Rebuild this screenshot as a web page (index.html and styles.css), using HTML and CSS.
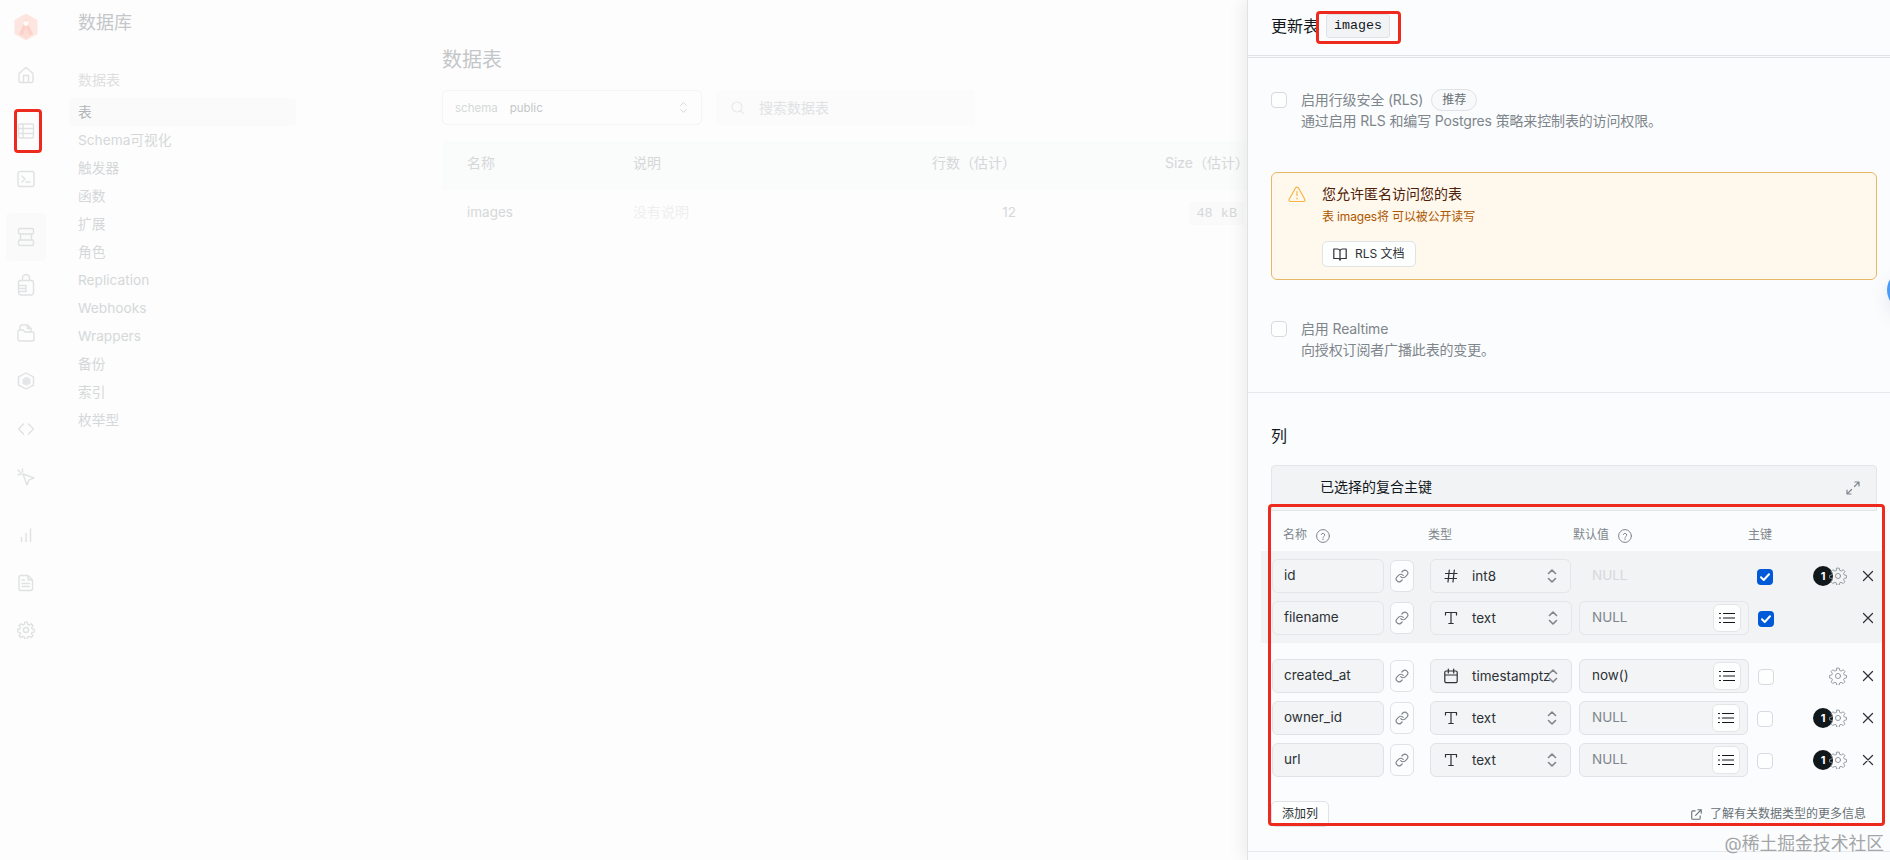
FILE: index.html
```
<!DOCTYPE html>
<html lang="zh-CN">
<head>
    <meta charset="UTF-8">
    <title>数据库</title>
    <link rel="stylesheet" href="styles.css">
</head>
<body>
<svg class="sprite">
    <symbol id="i-link" viewBox="0 0 24 24"><path d="M10 13a5 5 0 0 0 7.54.54l3-3a5 5 0 0 0-7.07-7.07l-1.72 1.71"/><path d="M14 11a5 5 0 0 0-7.54-.54l-3 3a5 5 0 0 0 7.07 7.07l1.71-1.71"/></symbol>
    <symbol id="i-updown" viewBox="0 0 10 16"><path d="M1.5 5.5 5 2l3.500 3.500M1.500 10.500 5 14l3.500-3.500"/></symbol>
    <symbol id="i-list" viewBox="0 0 16 12"><path d="M4.500 1.500H15.500M4.500 6H15.500M4.500 10.500H15.500M.5 1.500h1M.5 6h1M.5 10.500h1"/></symbol>
    <symbol id="i-x" viewBox="0 0 12 12"><path d="M1.500 1.500l9 9M10.500 1.500l-9 9"/></symbol>
    <symbol id="i-type" viewBox="0 0 14 14"><path d="M1.500 4V1.500h11V4M7 1.500v11M4.800 12.500h4.400"/></symbol>
    <symbol id="i-hash" viewBox="0 0 14 14"><path d="M1.500 4.500h11.500M1 9.500h11.500M5.300 1 4 13M10.300 1 9 13"/></symbol>
    <symbol id="i-cal" viewBox="0 0 14 16"><path d="M2.300 3h9.400a1.500 1.500 0 0 1 1.500 1.500v8.700a1.500 1.500 0 0 1-1.500 1.500H2.300a1.500 1.500 0 0 1-1.500-1.500V4.500A1.500 1.500 0 0 1 2.300 3zM.8 7h12.400M4.300 1v4M9.700 1v4"/></symbol>
    <symbol id="i-help" viewBox="0 0 14 14"><circle cx="7" cy="7" r="6.400"/><path d="M5.300 5.500a1.750 1.750 0 0 1 3.400.6c0 1.100-1.700 1.400-1.700 2.200M7 9.800v.8"/></symbol>
    <symbol id="i-cog" viewBox="0 0 24 24"><circle cx="12" cy="12" r="3.400"/><path d="M10.400 1.500h3.200l.7 3.100 1.900.8 2.700-1.700 2.300 2.300-1.700 2.700.8 1.900 3.100.7v3.200l-3.100.7-.8 1.900 1.700 2.700-2.300 2.300-2.700-1.700-1.900.8-.7 3.100h-3.200l-.7-3.100-1.900-.8-2.700 1.700-2.300-2.300 1.700-2.700-.8-1.900-3.100-.7v-3.200l3.100-.7.8-1.900-1.700-2.700 2.300-2.300 2.700 1.700 1.900-.8z"/></symbol>
    <symbol id="i-check" viewBox="0 0 16 16"><path d="M4 8.300 6.700 11 12 5.300"/></symbol>
</svg>

<div class="page">
    <nav class="rail">
        <a class="logo">
            <svg width="26" height="28" viewBox="0 0 26 28"><path d="M13 .5 24.500 7v14L13 27.500 1.500 21V7z" fill="#fde6df"/><path d="M13 6 20 21l-3.500 2L13 15l-3.500 8L6 21z" fill="#fbd2c9"/><path d="M13 15l3.500 8L13 26l-3.500-3z" fill="#fcdcd5"/><circle cx="13" cy="10.500" r="2.500" fill="#fffaf5"/></svg>
        </a>
        <a class="icon"><svg width="18" height="18" viewBox="0 0 18 18"><path d="M2 7.500 9 1.500l7 6v7a2 2 0 0 1-2 2H4a2 2 0 0 1-2-2zM6.500 16.500V9.500h5v7"/></svg></a>
        <a class="icon gap8"><svg width="18" height="18" viewBox="0 0 18 18"><path d="M3 2h12a1.500 1.500 0 0 1 1.500 1.500v11A1.500 1.500 0 0 1 15 16H3a1.500 1.500 0 0 1-1.500-1.500v-11A1.500 1.500 0 0 1 3 2zM1.500 6.500h15M1.500 11.500h15M6 2v14"/></svg></a>
        <a class="icon"><svg width="18" height="18" viewBox="0 0 18 18"><rect x="1" y="1.500" width="16" height="15" rx="2"/><path d="M5 6l3 3-3 3M9 12h4"/></svg></a>
        <a class="icon gap10 active"><svg width="18" height="20" viewBox="0 0 18 20"><rect x="1.500" y="1.500" width="15" height="5.500" rx="1.500"/><rect x="1.500" y="13" width="15" height="5.500" rx="1.500"/><path d="M3.500 7V13M14.500 7V13"/></svg></a>
        <a class="icon"><svg width="18" height="22" viewBox="0 0 18 22"><path d="M5.500 6.500V4a3.500 3.500 0 0 1 7 0v2.500M4 6.500h10a2.500 2.500 0 0 1 2.500 2.500v9.500A2.500 2.500 0 0 1 14 21H4a2.500 2.500 0 0 1-2.500-2.500V9A2.500 2.500 0 0 1 4 6.500zM1.500 11.500h7.500v6H1.500M3 14.500h6"/></svg></a>
        <a class="icon"><svg width="18" height="18" viewBox="0 0 18 18"><path d="M3 6V2.500A1.500 1.500 0 0 1 4.500 1h6L14 4.500V7M10.500 1v3.500H14M1 14.500V7.500A1.500 1.500 0 0 1 2.500 6H6l2 2h7.500A1.500 1.500 0 0 1 17 9.500v5.500a2 2 0 0 1-2 2H3a2 2 0 0 1-2-2.500z"/></svg></a>
        <a class="icon"><svg width="18" height="18" viewBox="0 0 18 18"><path d="M9 1l7.500 3.800v8.400L9 17l-7.500-3.800V4.800z"/><path class="solid" d="M9.500 4.800 13.500 7v4.500l-4 2.200-4-2.200V7z"/></svg></a>
        <a class="icon"><svg width="18" height="18" viewBox="0 0 18 18"><path d="M6.500 4 1.500 9l5 5M11.500 4l5 5-5 5"/></svg></a>
        <a class="icon"><svg width="18" height="18" viewBox="0 0 18 18"><path d="M6 6l11 3.800-4.800 2L10 17zM1 2l3 3M5.500 1v3M1 6.500h3"/></svg></a>
        <a class="icon gap10"><svg width="18" height="18" viewBox="0 0 18 18"><path d="M4.500 11.500v4M9 7.500v8M13.500 3v12.500"/></svg></a>
        <a class="icon"><svg width="18" height="18" viewBox="0 0 18 18"><path d="M4 1.500h7l4.500 4.500v8.500a2 2 0 0 1-2 2H4a2 2 0 0 1-2-2v-11a2 2 0 0 1 2-2zM11 1.500V6h4.500M5 6h2.500M5 9.500h7.500M5 12.500h7.500"/></svg></a>
        <a class="icon last"><svg width="18" height="18" viewBox="0 0 24 24"><use href="#i-cog"/></svg></a>
    </nav>

    <aside class="sidebar">
        <h1>数据库</h1>
        <h2>数据表</h2>
        <ul>
            <li class="selected">表</li>
            <li>Schema可视化</li>
            <li>触发器</li>
            <li>函数</li>
            <li>扩展</li>
            <li>角色</li>
            <li>Replication</li>
            <li>Webhooks</li>
            <li>Wrappers</li>
            <li>备份</li>
            <li>索引</li>
            <li>枚举型</li>
        </ul>
    </aside>

    <main class="main">
        <h1>数据表</h1>
        <div class="filters">
            <div class="schema"><span>schema</span><b>public</b><svg width="9" height="13"><use href="#i-updown"/></svg></div>
            <div class="search"><svg width="13" height="13" viewBox="0 0 13 13"><circle cx="6" cy="6" r="5"/><path d="M10 10l2.500 2.500"/></svg>搜索数据表</div>
        </div>
        <div class="thead"><span>名称</span><span>说明</span><span class="rows">行数（估计）</span><span class="size">Size（估计）</span></div>
        <div class="trow"><span>images</span><span class="none">没有说明</span><span class="rows">12</span><span class="size"><code>48 kB</code></span></div>
    </main>

    <section class="panel">
        <header>更新表<code>images</code></header>
        <div class="options">
            <div class="option">
                <i class="box"></i>
                <div>
                    <p class="label">启用行级安全 (RLS)<span class="tag">推荐</span></p>
                    <p>通过启用 RLS 和编写 Postgres 策略来控制表的访问权限。</p>
                </div>
            </div>
            <div class="alert">
                <svg class="warn" width="18" height="17" viewBox="0 0 18 17"><path d="M7.700 1.800 1.200 13.200A1.500 1.500 0 0 0 2.500 15.500h13a1.500 1.500 0 0 0 1.300-2.300L10.300 1.800a1.500 1.500 0 0 0-2.600 0zM9 5.500v4M9 12v1"/></svg>
                <div>
                    <h3>您允许匿名访问您的表</h3>
                    <p>表 images将 可以被公开读写</p>
                    <button><svg width="14" height="13" viewBox="0 0 14 13"><path d="M7 2.500C6.500 1.500 5.500 1 4.500 1H.8v9.500H5c1 0 2 .6 2 1.700 0-1.100 1-1.700 2-1.700h4.200V1H9.500C8.500 1 7.500 1.500 7 2.500zM7 2.500v9.500"/></svg>RLS 文档</button>
                </div>
            </div>
            <div class="option">
                <i class="box"></i>
                <div>
                    <p class="label">启用 Realtime</p>
                    <p>向授权订阅者广播此表的变更。</p>
                </div>
            </div>
        </div>

        <div class="columns">
            <h2>列</h2>
            <div class="notice">已选择的复合主键
                <svg width="14" height="14" viewBox="0 0 14 14"><path d="M8.500 5.500 12.800 1.200M9 1h4v4M5.500 8.500 1.200 12.800M1 9v4h4"/></svg>
            </div>
            <div class="heads">
                <span class="h-name">名称<svg width="14" height="14"><use href="#i-help"/></svg></span>
                <span class="h-type">类型</span>
                <span class="h-default">默认值<svg width="14" height="14"><use href="#i-help"/></svg></span>
                <span>主键</span>
            </div>
            <div class="rows-group keys">
                <div class="row">
                    <div class="input">id</div>
                    <div class="fk"><svg width="14" height="14"><use href="#i-link"/></svg></div>
                    <div class="input type short"><svg class="ti" width="14" height="14"><use href="#i-hash"/></svg>int8<svg class="ud" width="10" height="16"><use href="#i-updown"/></svg></div>
                    <div class="input default off">NULL</div>
                    <i class="box on"><svg width="16" height="16"><use href="#i-check"/></svg></i>
                    <div class="tools"><em>1</em><svg width="18" height="18"><use href="#i-cog"/></svg></div>
                    <svg class="del" width="12" height="12"><use href="#i-x"/></svg>
                </div>
                <div class="row">
                    <div class="input">filename</div>
                    <div class="fk"><svg width="14" height="14"><use href="#i-link"/></svg></div>
                    <div class="input type"><svg class="ti" width="14" height="14"><use href="#i-type"/></svg>text<svg class="ud" width="10" height="16"><use href="#i-updown"/></svg></div>
                    <div class="input default">NULL<span class="pick"><svg width="16" height="12"><use href="#i-list"/></svg></span></div>
                    <i class="box on"><svg width="16" height="16"><use href="#i-check"/></svg></i>
                    <div class="tools"></div>
                    <svg class="del" width="12" height="12"><use href="#i-x"/></svg>
                </div>
            </div>
            <div class="rows-group">
                <div class="row">
                    <div class="input">created_at</div>
                    <div class="fk"><svg width="14" height="14"><use href="#i-link"/></svg></div>
                    <div class="input type"><svg class="ti" width="14" height="16"><use href="#i-cal"/></svg><span class="long">timestamptz</span><svg class="ud" width="10" height="16"><use href="#i-updown"/></svg></div>
                    <div class="input default filled">now()<span class="pick"><svg width="16" height="12"><use href="#i-list"/></svg></span></div>
                    <i class="box"></i>
                    <div class="tools"><svg width="18" height="18"><use href="#i-cog"/></svg></div>
                    <svg class="del" width="12" height="12"><use href="#i-x"/></svg>
                </div>
                <div class="row">
                    <div class="input">owner_id</div>
                    <div class="fk"><svg width="14" height="14"><use href="#i-link"/></svg></div>
                    <div class="input type short"><svg class="ti" width="14" height="14"><use href="#i-type"/></svg>text<svg class="ud" width="10" height="16"><use href="#i-updown"/></svg></div>
                    <div class="input default short">NULL<span class="pick"><svg width="16" height="12"><use href="#i-list"/></svg></span></div>
                    <i class="box"></i>
                    <div class="tools"><em>1</em><svg width="18" height="18"><use href="#i-cog"/></svg></div>
                    <svg class="del" width="12" height="12"><use href="#i-x"/></svg>
                </div>
                <div class="row">
                    <div class="input">url</div>
                    <div class="fk"><svg width="14" height="14"><use href="#i-link"/></svg></div>
                    <div class="input type short"><svg class="ti" width="14" height="14"><use href="#i-type"/></svg>text<svg class="ud" width="10" height="16"><use href="#i-updown"/></svg></div>
                    <div class="input default short">NULL<span class="pick"><svg width="16" height="12"><use href="#i-list"/></svg></span></div>
                    <i class="box"></i>
                    <div class="tools"><em>1</em><svg width="18" height="18"><use href="#i-cog"/></svg></div>
                    <svg class="del" width="12" height="12"><use href="#i-x"/></svg>
                </div>
            </div>
            <div class="foot">
                <button>添加列</button>
                <a><svg width="11" height="11" viewBox="0 0 12 12"><path d="M4.500 2H2A1.200 1.200 0 0 0 .8 3.200V10A1.200 1.200 0 0 0 2 11.200h6.800A1.200 1.200 0 0 0 10 10V7.500M7.500.8h3.700v3.700M11 1 5 7"/></svg>了解有关数据类型的更多信息</a>
            </div>
        </div>
    </section>

    <div class="mark mark-rail"></div>
    <div class="mark mark-title"></div>
    <div class="mark mark-columns"></div>
    <div class="bubble"></div>
    <div class="watermark">@稀土掘金技术社区</div>
</div>
</body>
</html>
```
FILE: styles.css
```
*{
    margin: 0;
    padding: 0;
    box-sizing: border-box;
}
body{
    font: 14px/20px Inter, "Noto Sans CJK SC", sans-serif;
    color: #11181c;
    background: #fdfdfd;
}
ul{
    list-style: none;
}
h1, h2, h3, b{
    font-weight: normal;
}
i, em{
    font-style: normal;
}
svg{
    fill: none;
    stroke: currentColor;
    stroke-width: 1.2;
    stroke-linecap: round;
    stroke-linejoin: round;
    flex-shrink: 0;
    display: block;
}
.sprite{
    position: absolute;
    width: 0;
    height: 0;
}
button{
    font: 12px/18px Inter, "Noto Sans CJK SC", sans-serif;
    color: #2b3135;
    background: #fdfefe;
    border: 1px solid #dfe3e6;
    border-radius: 5px;
    display: flex;
    align-items: center;
}
.page{
    display: flex;
    width: 1890px;
    height: 860px;
    position: relative;
    overflow: hidden;
}

/* icon rail */
.rail{
    width: 52px;
    display: flex;
    flex-direction: column;
    align-items: center;
    color: #dfe1e2;
}
.logo{
    height: 51px;
    padding-top: 13px;
}
.logo svg{
    stroke: none;
}
.icon{
    width: 40px;
    height: 48px;
    display: flex;
    align-items: center;
    justify-content: center;
}
.icon svg{
    stroke-width: 1.4;
}
.icon .solid{
    fill: #e4e6e7;
    stroke: none;
}
.last{
    height: 46px;
}
.last svg{
    stroke-width: 1.9;
}
.gap8{
    margin-top: 8px;
}
.gap10{
    margin-top: 10px;
}
.active{
    background: #fafafa;
    border-radius: 4px;
}

/* menu */
.sidebar{
    width: 244px;
    padding: 10px 0 0 17px;
    color: #d5d8d9;
}
.sidebar h1{
    padding-left: 9px;
    font-size: 18px;
    line-height: 26px;
    color: #c4c7c9;
}
.sidebar h2{
    padding: 33px 0 8px 9px;
    font-size: 14px;
    line-height: 21px;
    color: #dddfe0;
}
.sidebar li{
    height: 28px;
    padding-left: 9px;
    font-size: 13.700px;
    line-height: 28px;
}
.sidebar .selected{
    background: #fafafa;
    color: #b2b5b7;
    border-radius: 4px;
}

/* table list */
.main{
    width: 951px;
    padding: 46px 0 0 146px;
    color: #d5d8d9;
}
.main h1{
    font-size: 20px;
    line-height: 28px;
    color: #c4c7c9;
}
.filters{
    display: flex;
    gap: 14px;
    margin: 16px 0;
}
.schema{
    width: 260px;
    height: 35px;
    padding: 0 13px 0 12px;
    display: flex;
    align-items: center;
    border: 1px solid #f4f5f5;
    border-radius: 5px;
    font-size: 11.500px;
}
.schema b{
    margin: 0 auto 0 12px;
    color: #c4c7c9;
}
.search{
    width: 259px;
    height: 35px;
    padding-left: 15px;
    display: flex;
    align-items: center;
    gap: 15px;
    background: #fbfbfb;
    color: #e0e2e3;
}
.search svg{
    color: #e8eaea;
}
.thead, .trow{
    display: flex;
    height: 49px;
    align-items: center;
    padding: 0 0 6px 25px;
}
.thead{
    background: #fafbfb;
}
.trow{
    padding-bottom: 5px;
    font-size: 13.500px;
}
.thead span, .trow span{
    width: 166px;
    flex-shrink: 0;
}
.thead .rows, .trow .rows{
    width: 217px;
    text-align: right;
}
.thead .size{
    width: 233px;
    text-align: right;
}
.trow .size{
    width: 228px;
    text-align: right;
}
.trow .none{
    font-size: 14px;
    color: #efefef;
}
.trow code{
    padding: 4px 7px;
    font: 13.500px "Liberation Mono", monospace;
    background: #fafafa;
}

/* side panel */
.panel{
    width: 643px;
    border-left: 1px solid #dfe3e6;
    background: #fbfcfd;
    box-shadow: -4px 0 16px rgba(0, 0, 0, .07);
    position: relative;
}
.panel header{
    display: flex;
    align-items: center;
    height: 58px;
    padding: 0 0 3px 23px;
    border-bottom: 3px double #dfe3e6;
    font-size: 16px;
}
.panel header code{
    margin-left: 7px;
    height: 24px;
    padding: 0 7px;
    border: 1px solid #dfe3e6;
    border-radius: 3px;
    background: #f1f3f5;
    font: 13.300px/22px "Liberation Mono", monospace;
}
.options{
    height: 335px;
    padding: 31px 13px 0 23px;
    border-bottom: 1px solid #e6e8eb;
    color: #7e868c;
    letter-spacing: -.15px;
}
.option{
    display: flex;
    gap: 14px;
}
.label{
    display: flex;
    align-items: center;
    height: 22px;
}
.box{
    width: 16px;
    height: 16px;
    border: 1px solid #d7dbdf;
    border-radius: 4px;
    background: #fdfefe;
}
.option .box{
    margin-top: 3px;
}
.tag{
    margin-left: 8px;
    padding: 0 10px;
    border: 1px solid #dfe3e6;
    border-radius: 11px;
    background: #f8f9fa;
    font-size: 12px;
    line-height: 20px;
    letter-spacing: 0;
    color: #687076;
}
.alert{
    display: flex;
    gap: 15px;
    height: 108px;
    margin: 41px 0 38px;
    padding: 10px 18px 10px 16px;
    border: 1px solid #e8b765;
    border-radius: 6px;
    background: #fff8ec;
}
.warn{
    margin: 3px 1px 0 0;
    color: #f5b544;
}
.alert h3{
    font-size: 14px;
    line-height: 22px;
    letter-spacing: 0;
    color: #4e2009;
}
.alert p{
    margin: 2px 0 14px;
    font-size: 12px;
    color: #ad5700;
}
.alert button{
    height: 26px;
    padding: 0 10px;
    gap: 8px;
}

/* column editor */
.columns{
    padding: 31px 12px 0 23px;
    height: 459px;
    border-bottom: 1px solid #e6e8eb;
}
.columns h2{
    font-size: 16px;
    line-height: 24px;
}
.notice{
    display: flex;
    align-items: center;
    justify-content: space-between;
    width: 606px;
    height: 46px;
    margin-top: 17px;
    padding: 0 16px 2px 48px;
    border: 1px solid #e3e6e8;
    border-radius: 4px 4px 0 0;
    background: #f1f3f4;
}
.notice svg{
    color: #7e868c;
    margin-top: 2px;
}
.heads{
    display: flex;
    height: 40px;
    padding: 8px 0 0 12px;
    align-items: center;
    font-size: 12px;
    color: #7e868c;
}
.heads span{
    display: flex;
    align-items: center;
    gap: 9px;
}
.heads svg{
    stroke-width: 1;
    margin-top: 1px;
}
.h-name{
    width: 145px;
}
.h-type{
    width: 145px;
}
.h-default{
    width: 175px;
}
.rows-group{
    margin: 0 -7px 0 -10px;
    padding: 4px 0 4px 11px;
}
.keys{
    margin-bottom: 8px;
    background: #f1f3f4;
}
.row{
    display: flex;
    align-items: center;
    height: 42px;
}
.input{
    width: 112px;
    height: 34px;
    padding-left: 11px;
    border: 1px solid #dfe3e6;
    border-radius: 6px;
    background: #f3f4f6;
    font-size: 13.500px;
    line-height: 31px;
    color: #2b3135;
}
.keys .input{
    border-color: #e3e6e8;
}
.fk{
    display: flex;
    align-items: center;
    justify-content: center;
    width: 24px;
    height: 32px;
    margin: 0 16px 0 6px;
    border: 1px solid #dfe3e6;
    border-radius: 6px;
    background: #fcfdfe;
    color: #7e868c;
}
.fk svg{
    stroke-width: 2;
}
.type{
    width: 142px;
    margin-right: 7px;
    padding: 0 13px;
    display: flex;
    align-items: center;
    line-height: 20px;
}
.type.short{
    width: 141px;
    margin-right: 8px;
}
.ti{
    width: 14px;
    margin-right: 14px;
}
/* long type names run under the chevrons */
.long{
    width: 72px;
    white-space: nowrap;
}
.ud{
    margin-left: auto;
    color: #7e868c;
    stroke-width: 1.6;
}
.default{
    display: flex;
    justify-content: space-between;
    width: 170px;
    margin-right: 9px;
    padding: 0 7px 0 12px;
    color: #7e868c;
}
.default.short{
    width: 169px;
}
.filled{
    color: #2b3135;
}
.off{
    width: 169px;
    background: none;
    color: #d5d9dc;
}
.keys .off{
    border-color: transparent;
}
.pick{
    width: 28px;
    height: 28px;
    margin-top: 2px;
    display: flex;
    align-items: center;
    justify-content: center;
    border: 1px solid #e3e6e8;
    border-radius: 6px;
    background: #fdfefe;
    color: #11181c;
}
.row .box{
    margin-top: 2px;
}
.box.on{
    border: 0;
    background: #0059d6;
    color: #fff;
}
.box.on svg{
    stroke-width: 2;
}
.tools{
    display: flex;
    align-items: center;
    justify-content: flex-end;
    margin-left: auto;
    color: #8b9297;
}
.tools em{
    width: 20px;
    height: 20px;
    margin-right: -4px;
    border-radius: 50%;
    background: #11181c;
    color: #fff;
    font-size: 11px;
    font-weight: bold;
    text-align: center;
}
.del{
    margin: 0 11px 0 15px;
    color: #2b3135;
}
.foot{
    display: flex;
    justify-content: space-between;
    padding: 16px 12px 0 0;
}
.foot button{
    height: 26px;
    padding: 0 10px;
}
.foot a{
    display: flex;
    align-items: center;
    gap: 8px;
    font-size: 12px;
    color: #687076;
}

/* overlays */
.mark{
    position: absolute;
    border: 3px solid #ee2a1e;
    border-radius: 4px;
}
.mark-rail{
    left: 14px;
    top: 109px;
    width: 28px;
    height: 44px;
}
.mark-title{
    left: 1316px;
    top: 11px;
    width: 85px;
    height: 33px;
}
.mark-columns{
    left: 1268px;
    top: 504px;
    width: 617px;
    height: 322px;
}
.bubble{
    position: absolute;
    left: 1887px;
    top: 270px;
    width: 40px;
    height: 40px;
    border-radius: 50%;
    background: #4a9bf5;
    box-shadow: 0 8px 18px rgba(80, 90, 160, .12);
}
.watermark{
    position: absolute;
    right: 6px;
    top: 831px;
    font-size: 17.800px;
    line-height: 26px;
    color: #a3a5a7;
    text-shadow: 0 0 1px #fff;
}
```
